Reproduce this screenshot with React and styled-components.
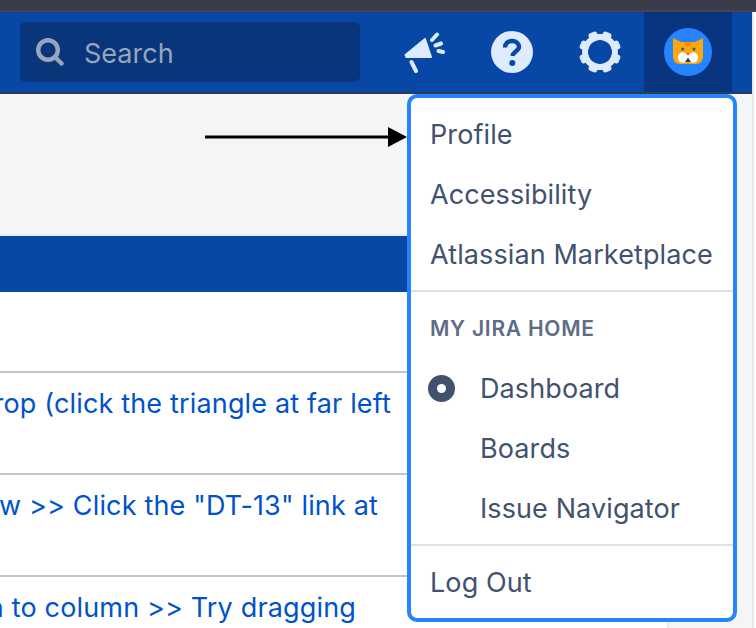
import React from 'react';
import styled, { createGlobalStyle } from 'styled-components';

const FONT = '"Inter", "Liberation Sans", sans-serif';

const Global = createGlobalStyle`
  html, body { margin: 0; padding: 0; background: #fff; }
  body { width: 756px; height: 628px; overflow: hidden; font-family: ${FONT}; }
`;

const Page = styled.div`
  position: relative;
  width: 756px;
  height: 628px;
  overflow: hidden;
  display: flex;
  flex-direction: column;
`;

const TopStrip = styled.div`
  height: 10px;
  flex: none;
  background: #3a3b4b;
  border-bottom: 2px solid #45464f;
`;

const Frame = styled.div`
  flex: 1;
  width: 752px;
  min-height: 0;
  display: flex;
  flex-direction: column;
  border-right: 2px solid #e6e7ea;
`;

const Nav = styled.header`
  height: 80px;
  flex: none;
  background: #0747a6;
  border-bottom: 2px solid #2f3a55;
  display: flex;
  align-items: center;
  padding-left: 20px;
`;

const SearchBox = styled.div`
  width: 340px;
  height: 60px;
  border-radius: 6px;
  background: #09357a;
  display: flex;
  align-items: center;
  padding-left: 16px;
  box-sizing: border-box;
  gap: 20px;
  color: #98a5bd;
  font-size: 27px;
`;

const SearchLabel = styled.span`
  margin-top: 2px;
`;

const NavIcons = styled.div`
  margin-left: 20px;
  display: flex;
  height: 80px;
`;

const NavButton = styled.div`
  width: 88px;
  height: 80px;
  display: flex;
  align-items: center;
  justify-content: center;
  background: ${(props) => (props.$active ? '#093480' : 'transparent')};
`;

const Body = styled.div`
  flex: 1;
  min-height: 0;
  display: flex;
`;

const Main = styled.main`
  width: 669px;
  flex: none;
  display: flex;
  flex-direction: column;
  border-right: 2px solid #ebecf0;
  box-sizing: border-box;
`;

const Sidebar = styled.aside`
  flex: 1;
  background: #f4f5f7;
`;

const Subheader = styled.div`
  height: 140px;
  flex: none;
  background: #f4f5f7;
  border-bottom: 2px solid #ebecf0;
`;

const Band = styled.div`
  height: 56px;
  flex: none;
  background: #0747a6;
`;

const Rows = styled.div`
  padding-top: 79px;
`;

const Row = styled.div`
  height: 102px;
  border-top: 2px solid #c1c7d0;
  box-sizing: border-box;
  padding: 14px ${(props) => props.$inset} 0 0;
  display: flex;
  justify-content: flex-end;
  white-space: nowrap;
  color: #0052cc;
  font-size: 27px;
  letter-spacing: 0.16px;
  line-height: 34px;
`;

const Menu = styled.nav`
  position: absolute;
  left: 407px;
  top: 94px;
  width: 330px;
  height: 528px;
  box-sizing: border-box;
  border: 4px solid #2684ff;
  border-radius: 10px;
  background: #fff;
  color: #42526e;
  font-size: 27px;
  letter-spacing: 0.1px;
`;

const Section = styled.div`
  padding: ${(props) => props.$padding};
  border-top: ${(props) => (props.$divided ? '2px solid #dfe1e6' : 'none')};
`;

const Item = styled.div`
  height: 60px;
  line-height: 60px;
  padding-left: ${(props) => (props.$indented ? '69px' : '19px')};
  position: relative;
  white-space: nowrap;
`;

const Heading = styled.div`
  color: #5e6c84;
  font-size: 21px;
  font-weight: 600;
  letter-spacing: 0.75px;
  padding-left: 19px;
  line-height: 24px;
  margin-bottom: 18px;
`;

const Radio = styled.span`
  position: absolute;
  left: 17px;
  top: 16px;
  width: 27px;
  height: 27px;
  border-radius: 50%;
  background: #42526e;
  display: flex;
  align-items: center;
  justify-content: center;

  &::after {
    content: '';
    width: 9px;
    height: 9px;
    border-radius: 50%;
    background: #fff;
  }
`;

const Arrow = styled.svg`
  position: absolute;
  left: 205px;
  top: 126px;
`;

const SearchIcon = () => (
  <svg width="28" height="28" viewBox="0 0 28 28" fill="none" stroke="#98a5bd" strokeWidth="4.4">
    <circle cx="12" cy="12" r="9.8" />
    <path d="M19 19L25.5 25.5" strokeLinecap="round" />
  </svg>
);

const MegaphoneIcon = () => (
  <svg width="42" height="42" viewBox="0 0 42 42" fill="#deebff" stroke="#deebff" strokeLinecap="round" strokeLinejoin="round">
    <path d="M2.5 24L22 8L28 26H3.5Z" strokeWidth="2" />
    <path d="M8.5 31L13 40" strokeWidth="4" fill="none" />
    <path d="M29 9L34 3.5M32.5 14.5L38 12.5M35.5 20L40 21" strokeWidth="4" fill="none" />
  </svg>
);

const HelpIcon = () => (
  <svg width="42" height="42" viewBox="0 0 42 42">
    <circle cx="21" cy="21" r="21" fill="#deebff" />
    <path d="M14 16.5C14 12.5 17 10 21 10C25 10 28 12.5 28 16C28 20 22 20.5 21.5 25" fill="none" stroke="#0747a6" strokeWidth="4.4" />
    <circle cx="21.3" cy="32" r="3" fill="#0747a6" />
  </svg>
);

const GearIcon = () => (
  <svg width="44" height="44" viewBox="0 0 44 44">
    <g fill="#deebff">
      {[0, 45, 90, 135, 180, 225, 270, 315].map((a) => (
        <rect key={a} x="17.5" y="1" width="9" height="9" rx="2.5" transform={`rotate(${a + 22.5} 22 22)`} />
      ))}
    </g>
    <circle cx="22" cy="22" r="15" fill="none" stroke="#deebff" strokeWidth="6" />
  </svg>
);

const CatAvatar = () => (
  <svg width="48" height="48" viewBox="0 0 48 48">
    <circle cx="24" cy="24" r="24" fill="#2684ff" />
    <path d="M9 10L17 14H31L39 10V29C39 33 36 36 32 36H16C12 36 9 33 9 29Z" fill="#ffa60a" />
    <path d="M20 14H28C27.5 16 26 17 24 17C22 17 20.5 16 20 14Z" fill="#ff8b00" />
    <circle cx="18.7" cy="21" r="1.5" fill="#42526e" />
    <circle cx="30" cy="21" r="1.5" fill="#42526e" />
    <circle cx="19" cy="29.5" r="5.2" fill="#fff" />
    <circle cx="29" cy="29.5" r="5.2" fill="#fff" />
    <path d="M22 25H26L24 27.5Z" fill="#ff5630" />
    <path d="M24 29.5L27 34H21Z" fill="#344563" />
  </svg>
);

export default function App() {
  return (
    <Page>
      <Global />
      <TopStrip />
      <Frame>
        <Nav>
          <SearchBox>
            <SearchIcon />
            <SearchLabel>Search</SearchLabel>
          </SearchBox>
          <NavIcons>
            <NavButton><MegaphoneIcon /></NavButton>
            <NavButton><HelpIcon /></NavButton>
            <NavButton><GearIcon /></NavButton>
            <NavButton $active><CatAvatar /></NavButton>
          </NavIcons>
        </Nav>
        <Body>
          <Main>
            <Subheader />
            <Band />
            <Rows>
              <Row $inset="276px">rop (click the triangle at far left</Row>
              <Row $inset="289px">w &gt;&gt; Click the "DT-13" link at</Row>
              <Row $inset="311px">n to column &gt;&gt; Try dragging</Row>
            </Rows>
          </Main>
          <Sidebar />
        </Body>
      </Frame>
      <Arrow width="203" height="22" viewBox="0 0 203 22">
        <path d="M0 9.5H183V1L202 11L183 21V12.5H0Z" fill="#000" />
      </Arrow>
      <Menu>
        <Section $padding="7px 0 5px">
          <Item>Profile</Item>
          <Item>Accessibility</Item>
          <Item>Atlassian Marketplace</Item>
        </Section>
        <Section $divided $padding="25px 0 5px">
          <Heading>MY JIRA HOME</Heading>
          <Item $indented><Radio />Dashboard</Item>
          <Item $indented>Boards</Item>
          <Item $indented>Issue Navigator</Item>
        </Section>
        <Section $divided $padding="7px 0 0">
          <Item>Log Out</Item>
        </Section>
      </Menu>
    </Page>
  );
}
